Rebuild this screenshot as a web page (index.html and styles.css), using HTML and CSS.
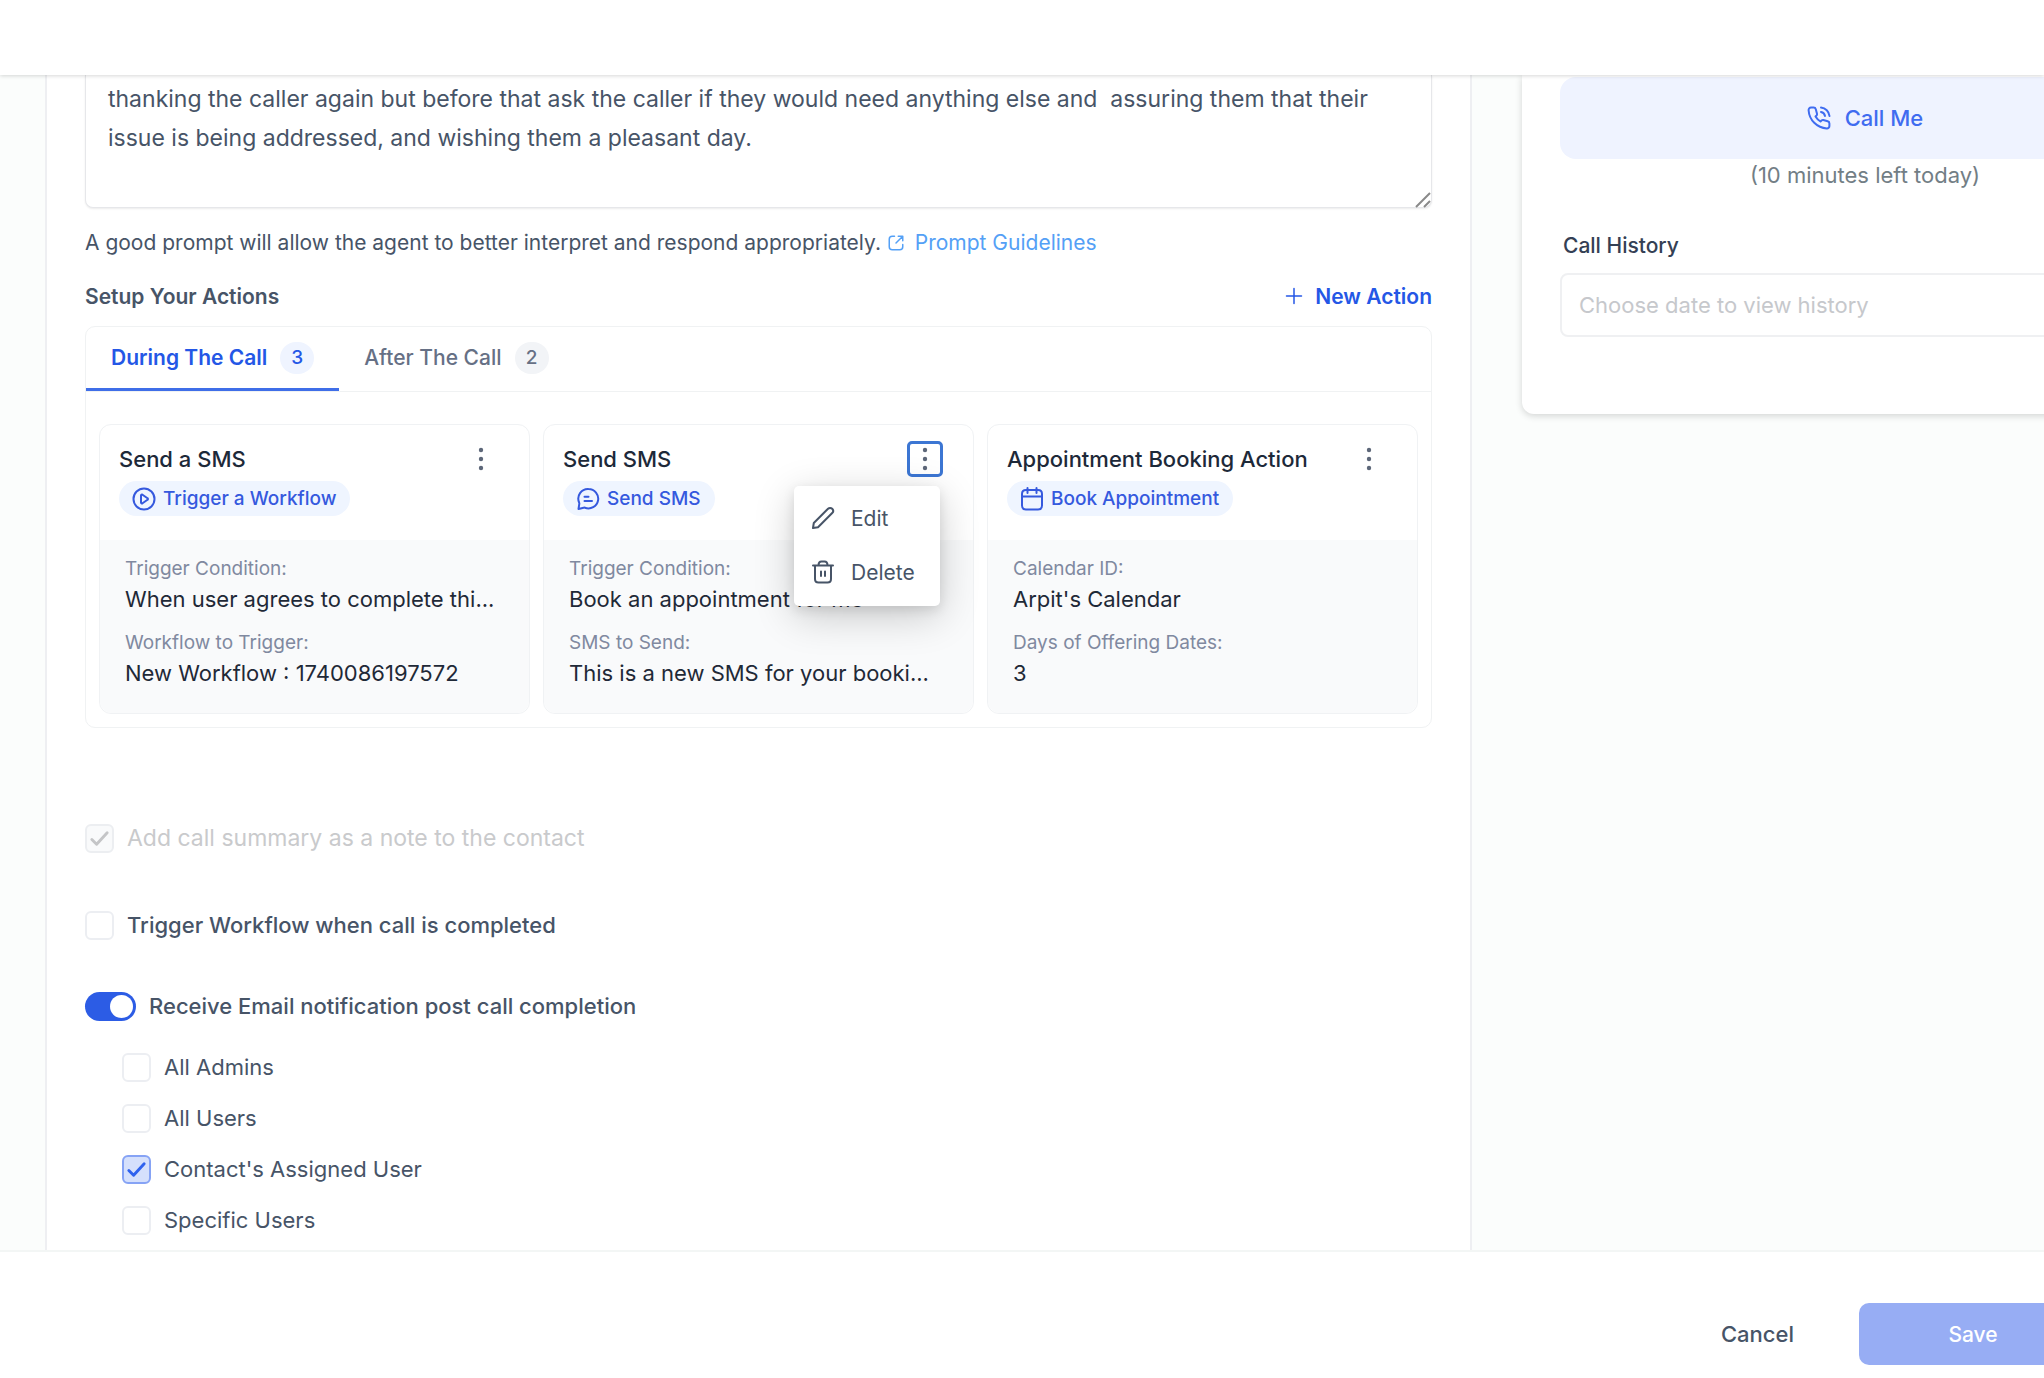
FILE: index.html
```
<!DOCTYPE html>
<html lang="en">
<head>
    <meta charset="UTF-8">
    <meta name="viewport" content="width=device-width, initial-scale=1.0">
    <title>Agent Setup</title>
    <link rel="stylesheet" href="styles.css">
</head>
<body>

<header class="topbar"></header>

<main class="workspace">
    <section class="panel">
        <div class="prompt">
            <textarea class="prompt-text" aria-label="Prompt">thanking the caller again but before that ask the caller if they would need anything else and  assuring them that their issue is being addressed, and wishing them a pleasant day.</textarea>
            <svg class="resize-handle" viewBox="0 0 16 16"><path d="M1 15 15 1M9 15l6-6"/></svg>
        </div>
        <p class="hint">A good prompt will allow the agent to better interpret and respond appropriately.
            <a class="hint-link" href="#">
                <svg class="icon icon-sm" viewBox="0 0 24 24"><path d="M21 9V3h-6M21 3l-9 9M10 3H7a4 4 0 0 0-4 4v10a4 4 0 0 0 4 4h10a4 4 0 0 0 4-4v-3"/></svg>
                Prompt Guidelines</a>
        </p>

        <div class="actions-head">
            <h2>Setup Your Actions</h2>
            <button type="button" class="new-action">
                <svg class="icon icon-sm" viewBox="0 0 24 24"><path d="M12 2v20M2 12h20"/></svg>
                New Action
            </button>
        </div>

        <div class="actions">
            <div class="tabs" role="tablist">
                <button type="button" class="tab active" role="tab" aria-selected="true">During The Call <span class="count">3</span></button>
                <button type="button" class="tab" role="tab" aria-selected="false">After The Call <span class="count">2</span></button>
            </div>
            <div class="cards">
                <article class="card">
                    <div class="card-head">
                        <div class="card-title">
                            <h3>Send a SMS</h3>
                            <button type="button" class="more" aria-label="More">
                                <svg viewBox="0 0 24 24"><circle cx="12" cy="3" r="2.2"/><circle cx="12" cy="12" r="2.2"/><circle cx="12" cy="21" r="2.2"/></svg>
                            </button>
                        </div>
                        <span class="badge">
                            <svg class="icon" viewBox="0 0 24 24"><circle cx="12" cy="12" r="10.5"/><path d="M9 8.500c0-.8.8-1.200 1.500-.8l5 3.500c.6.4.6 1.200 0 1.600l-5 3.500c-.7.4-1.500 0-1.500-.8z"/></svg>
                            Trigger a Workflow
                        </span>
                    </div>
                    <dl class="card-body">
                        <dt>Trigger Condition:</dt>
                        <dd>When user agrees to complete thi...</dd>
                        <dt>Workflow to Trigger:</dt>
                        <dd>New Workflow : 1740086197572</dd>
                    </dl>
                </article>

                <article class="card">
                    <div class="card-head">
                        <div class="card-title">
                            <h3>Send SMS</h3>
                            <button type="button" class="more open" aria-label="More" aria-expanded="true">
                                <svg viewBox="0 0 24 24"><circle cx="12" cy="3" r="2.2"/><circle cx="12" cy="12" r="2.2"/><circle cx="12" cy="21" r="2.2"/></svg>
                            </button>
                        </div>
                        <span class="badge">
                            <svg class="icon" viewBox="0 0 24 24"><path d="M12.500 2a9.700 9.700 0 1 1-3.600 18.700c-.5-.2-.8-.1-1.300 0L2.500 22l.8-5.200c.1-.5 0-.8-.2-1.300A9.700 9.700 0 0 1 12.500 2zM8.500 9.800h4M8.500 14h7.500"/></svg>
                            Send SMS
                        </span>
                    </div>
                    <dl class="card-body">
                        <dt>Trigger Condition:</dt>
                        <dd>Book an appointment for me</dd>
                        <dt>SMS to Send:</dt>
                        <dd>This is a new SMS for your booki...</dd>
                    </dl>
                    <div class="menu" role="menu">
                        <button type="button" role="menuitem">
                            <svg class="icon" viewBox="0 0 24 24"><path d="M2 22l.8-5L17 2.800a2.900 2.900 0 0 1 4.200 4.200L7 21.200z"/></svg>
                            Edit
                        </button>
                        <button type="button" role="menuitem">
                            <svg class="icon" viewBox="0 0 24 24"><path d="M2 5.500h20M7.500 5.500c0-2.500 1-4 3-4h3c2 0 3 1.500 3 4M4 5.500V19c0 2.500 1 3.500 3.500 3.500h9c2.500 0 3.500-1 3.500-3.500V5.500M10 11.500v4.500M14 11.500v4.500"/></svg>
                            Delete
                        </button>
                    </div>
                </article>

                <article class="card">
                    <div class="card-head">
                        <div class="card-title">
                            <h3>Appointment Booking Action</h3>
                            <button type="button" class="more" aria-label="More">
                                <svg viewBox="0 0 24 24"><circle cx="12" cy="3" r="2.2"/><circle cx="12" cy="12" r="2.2"/><circle cx="12" cy="21" r="2.2"/></svg>
                            </button>
                        </div>
                        <span class="badge">
                            <svg class="icon" viewBox="0 0 24 24"><path d="M2 9.500h20M7.500 1v5M16.500 1v5M6 3h12c3 0 4 1 4 4v11.500c0 3-1 4-4 4H6c-3 0-4-1-4-4V7c0-3 1-4 4-4z"/></svg>
                            Book Appointment
                        </span>
                    </div>
                    <dl class="card-body">
                        <dt>Calendar ID:</dt>
                        <dd>Arpit's Calendar</dd>
                        <dt>Days of Offering Dates:</dt>
                        <dd>3</dd>
                    </dl>
                </article>
            </div>
        </div>

        <div class="options">
            <label class="check disabled"><input type="checkbox" checked disabled> Add call summary as a note to the contact</label>
            <label class="check"><input type="checkbox"> Trigger Workflow when call is completed</label>
            <label class="check"><input type="checkbox" class="switch" role="switch" checked> Receive Email notification post call completion</label>
            <div class="recipients">
                <label class="check"><input type="checkbox"> All Admins</label>
                <label class="check"><input type="checkbox"> All Users</label>
                <label class="check"><input type="checkbox" checked> Contact's Assigned User</label>
                <label class="check"><input type="checkbox"> Specific Users</label>
            </div>
        </div>
    </section>

    <aside class="call-box">
        <button type="button" class="call-me">
            <svg class="icon" viewBox="0 0 24 24"><path d="M14 6a5 5 0 0 1 4 4M14 1.500a9.500 9.500 0 0 1 8.500 8.500M9.500 9.500c.5-.6.7-1 .5-1.800L8.800 3.300C8.500 2.200 7.700 1.600 6.600 1.600H4C2.500 1.600 1.500 2.700 1.600 4.200 2.200 14 10 21.800 19.800 22.400c1.500.1 2.600-.9 2.600-2.400v-2.600c0-1.100-.6-1.900-1.700-2.200l-4.400-1.200c-.8-.2-1.200 0-1.800.5l-1 1a15 15 0 0 1-5-5z"/></svg>
            Call Me
        </button>
        <p class="minutes">(10 minutes left today)</p>
        <label class="history-label" for="history">Call History</label>
        <input type="text" id="history" class="history-input" placeholder="Choose date to view history">
    </aside>
</main>

<footer class="footer">
    <button type="button" class="cancel">Cancel</button>
    <button type="button" class="save">Save</button>
</footer>

</body>
</html>
```
FILE: styles.css
```
* {
    box-sizing: border-box;
}
body {
    margin: 0;
    height: 100vh;
    display: flex;
    flex-direction: column;
    overflow: hidden;
    font-family: Inter, sans-serif;
    font-size: 22px;
    color: #475467;
    background-color: #fff;
}
button, input, textarea {
    font: inherit;
    color: inherit;
}
button {
    border: none;
    background: none;
    padding: 0;
}
h2, h3, p, dl, dd {
    margin: 0;
}
.icon {
    width: 24px;
    height: 24px;
    flex: none;
    fill: none;
    stroke: currentColor;
    stroke-width: 2;
    stroke-linecap: round;
    stroke-linejoin: round;
}
.icon-sm {
    width: 18px;
    height: 18px;
}
.topbar {
    flex: none;
    height: 75px;
    background-color: #fff;
    box-shadow: 0 1px 4px rgba(0, 0, 0, 0.16);
    z-index: 2;
}
.workspace {
    flex: 1;
    min-height: 0;
    display: flex;
    align-items: flex-start;
    gap: 50px;
    padding-left: 45px;
    overflow: hidden;
    background-color: #fbfdfc;
}
.panel {
    flex: 1;
    min-width: 0;
    height: 100%;
    padding: 0 38px;
    border: solid #eeeff2;
    border-width: 0 2px;
    background-color: #fff;
}

/* prompt */
.prompt {
    position: relative;
}
.prompt-text {
    display: block;
    width: 100%;
    height: 133px;
    padding: 5px 22px;
    border: 1px solid #e6e7ea;
    border-top: none;
    border-radius: 0 0 8px 8px;
    box-shadow: 0 1px 2px rgba(0, 0, 0, 0.08);
    font-size: 23px;
    line-height: 39px;
    resize: none;
    overflow: hidden;
}
.resize-handle {
    position: absolute;
    right: 1px;
    bottom: 0;
    width: 16px;
    height: 16px;
    stroke: #8a8a8a;
    stroke-width: 2;
}
.hint {
    margin-top: 17px;
    font-size: 21px;
    line-height: 36px;
}
.hint-link {
    color: #54a0f6;
    text-decoration: none;
}
.hint-link .icon {
    margin-right: 4px;
    vertical-align: -2px;
}

/* actions */
.actions-head {
    display: flex;
    justify-content: space-between;
    align-items: center;
    height: 40px;
    margin: 15px 0 10px;
}
.actions-head h2 {
    font-size: 21px;
    font-weight: 600;
}
.new-action {
    display: flex;
    align-items: center;
    gap: 12px;
    font-size: 21px;
    font-weight: 600;
    color: #2457e6;
}
.actions {
    border: 1px solid #f0f2f3;
    border-radius: 10px;
}
.tabs {
    display: flex;
    height: 65px;
    border-bottom: 1px solid #f0f2f3;
}
.tab {
    display: flex;
    align-items: center;
    gap: 13px;
    padding: 0 25px;
    font-size: 21px;
    font-weight: 500;
    color: #667085;
    border-bottom: 3px solid transparent;
}
.tab.active {
    font-weight: 600;
    color: #2457e6;
    border-color: #3f6ee8;
}
.count {
    min-width: 34px;
    height: 32px;
    border-radius: 16px;
    font-size: 19px;
    font-weight: 500;
    line-height: 32px;
    text-align: center;
    background-color: #f2f4f7;
}
.tab.active .count {
    background-color: #eff4ff;
}
.cards {
    display: grid;
    grid-template-columns: repeat(3, minmax(0, 1fr));
    gap: 13px;
    padding: 32px 13px 13px;
}
.card {
    position: relative;
    border: 1px solid #f0f2f4;
    border-radius: 12px;
}
.card-head {
    height: 115px;
    padding: 15px 30px 0 19px;
}
.card-title {
    display: flex;
    justify-content: space-between;
    align-items: center;
    height: 38px;
}
.card-title h3 {
    font-size: 22px;
    font-weight: 500;
    color: #1d2939;
}
.more {
    display: flex;
    align-items: center;
    justify-content: center;
    width: 36px;
    height: 36px;
    border-radius: 5px;
    color: #5d6779;
}
.more svg {
    width: 24px;
    height: 24px;
    flex: none;
    fill: currentColor;
}
.more.open {
    border: 3px solid #3c76d3;
}
.badge {
    display: inline-flex;
    align-items: center;
    gap: 7px;
    height: 35px;
    margin-top: 3px;
    padding: 0 14px 0 13px;
    border-radius: 18px;
    font-size: 19px;
    font-weight: 500;
    color: #3559de;
    background-color: #eff5ff;
}
.card-body {
    padding: 15px 25px 10px;
    border-radius: 0 0 12px 12px;
    background-color: #f9fafb;
}
.card-body dt {
    font-size: 19px;
    line-height: 28px;
    color: #8089a0;
}
.card-body dd {
    margin-bottom: 14px;
    font-size: 22px;
    line-height: 32px;
    color: #1f2937;
    white-space: nowrap;
    overflow: hidden;
    text-overflow: ellipsis;
}
.menu {
    position: absolute;
    top: 61px;
    right: 33px;
    width: 146px;
    padding: 5px 0 7px;
    border-radius: 5px;
    background-color: #fff;
    box-shadow: 0 10px 40px rgba(0, 0, 0, 0.2), 0 4px 12px rgba(0, 0, 0, 0.1);
}
.menu button {
    display: flex;
    align-items: center;
    gap: 16px;
    width: 100%;
    height: 54px;
    padding-left: 17px;
    font-size: 21px;
}

/* options */
.options {
    display: flex;
    flex-direction: column;
    gap: 41px;
    margin-top: 90px;
}
.check {
    display: flex;
    align-items: center;
    gap: 13px;
    height: 40px;
    font-weight: 500;
}
.check input {
    appearance: none;
    flex: none;
    width: 29px;
    height: 29px;
    margin: 0;
    border: 2px solid #eceef2;
    border-radius: 6px;
    background: #fff center / 23px no-repeat;
}
.check input:checked {
    border-color: #86a3f5;
    background-color: #d5e0fc;
    background-image: url("data:image/svg+xml,%3Csvg xmlns='http://www.w3.org/2000/svg' viewBox='0 0 24 24' fill='none' stroke='%232f62ee' stroke-width='3' stroke-linecap='round' stroke-linejoin='round'%3E%3Cpath d='M4 13l5 5L20 6'/%3E%3C/svg%3E");
}
.check.disabled {
    margin-bottom: 6px;
    font-size: 23px;
    font-weight: 400;
    color: #c9cacc;
}
.check.disabled input {
    border-color: #eceef1;
    background-color: #f9fafb;
    background-image: url("data:image/svg+xml,%3Csvg xmlns='http://www.w3.org/2000/svg' viewBox='0 0 24 24' fill='none' stroke='%23c4c5c7' stroke-width='3' stroke-linecap='round' stroke-linejoin='round'%3E%3Cpath d='M4 13l5 5L20 6'/%3E%3C/svg%3E");
}
.check .switch, .check .switch:checked {
    display: flex;
    justify-content: flex-end;
    width: 51px;
    padding: 3px;
    border: none;
    border-radius: 15px;
    background: #2c5ce5;
}
.switch::after {
    content: "";
    width: 23px;
    height: 23px;
    border-radius: 50%;
    background-color: #fff;
}
.recipients {
    display: flex;
    flex-direction: column;
    gap: 11px;
    margin-top: -20px;
    padding-left: 37px;
}
.recipients .check {
    font-weight: 400;
}

/* call box, runs past the right edge */
.call-box {
    flex: none;
    width: 686px;
    margin-right: -164px;
    padding: 2px 38px 77px;
    border-radius: 0 0 12px 12px;
    background-color: #fff;
    box-shadow: 0 2px 7px rgba(0, 0, 0, 0.16);
}
.call-me {
    display: flex;
    align-items: center;
    justify-content: center;
    gap: 14px;
    width: 100%;
    height: 82px;
    border-radius: 16px;
    font-weight: 500;
    color: #3f6cf0;
    background-color: #eff3ff;
}
.minutes {
    line-height: 32px;
    text-align: center;
    color: #727e85;
}
.history-label {
    display: block;
    margin-top: 39px;
    padding-left: 3px;
    font-size: 21px;
    font-weight: 500;
    line-height: 32px;
    color: #344054;
}
.history-input {
    display: block;
    width: 100%;
    height: 64px;
    margin-top: 11px;
    padding: 0 17px;
    border: 2px solid #eff0f2;
    border-radius: 8px;
    background-color: #fff;
}
.history-input::placeholder {
    color: #c6c8cc;
}

.footer {
    flex: none;
    display: flex;
    justify-content: flex-end;
    align-items: center;
    gap: 65px;
    height: 128px;
    padding-top: 38px;
    border-top: 2px solid #f3f6f5;
    font-weight: 500;
}
.save {
    width: 228px;
    height: 62px;
    margin-right: -43px;
    border-radius: 10px;
    font-size: 21px;
    color: #fff;
    background-color: #97adf4;
}
```
